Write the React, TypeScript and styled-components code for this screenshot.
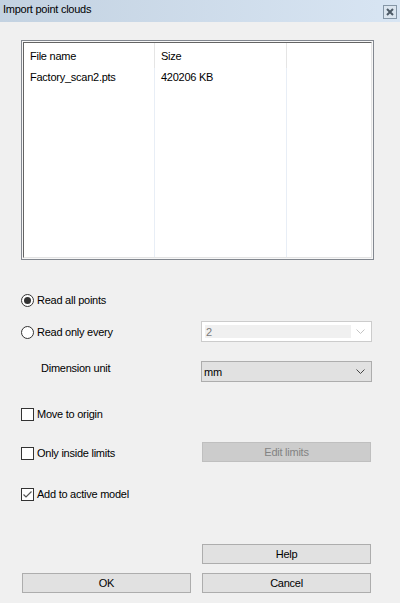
import React from "react";
import styled, { createGlobalStyle } from "styled-components";

const Global = createGlobalStyle`
  html, body { margin: 0; padding: 0; background: #f0f0f0; }
  body { width: 400px; height: 603px; overflow: hidden; font-family: "Liberation Sans", Arial, sans-serif; font-size: 11px; letter-spacing: -0.25px; color: #000; }
  * { box-sizing: border-box; }
`;

const Window = styled.div`
  width: 400px;
  height: 603px;
  background: #f0f0f0;
  display: flex;
  flex-direction: column;
`;

const TitleBar = styled.div`
  height: 22px;
  display: flex;
  align-items: center;
  justify-content: space-between;
  padding: 0 3px 0 3px;
  background: linear-gradient(to right, #c3d2e1, #d8e5f3);
`;

const Title = styled.span`
  font-size: 11px;
  color: #000;
  line-height: 1;
  margin-top: -3px;
`;

const CloseBox = styled.div`
  width: 14px;
  height: 14px;
  margin-top: 1px;
  border: 1px solid #8596a6;
  background: #dbe5ef;
  display: flex;
  align-items: center;
  justify-content: center;
`;

const Content = styled.div`
  padding: 18px 0 0 21px;
  display: flex;
  flex-direction: column;
`;

const ListFrame = styled.div`
  width: 353px;
  height: 220px;
  border: 1px solid #82878f;
  padding: 1px;
  background: #f7f7f7;
`;

const ListInner = styled.div`
  width: 100%;
  height: 100%;
  background: #fff;
  border-top: 1px solid #646464;
  border-left: 1px solid #646464;
  border-right: 1px solid #e3e3e3;
  border-bottom: 1px solid #e3e3e3;
  display: grid;
  grid-template-columns: 131px 132px 1fr;
`;

const Column = styled.div<{ $last?: boolean }>`
  border-right: ${(p) => (p.$last ? "none" : "1px solid #e8eef6")};
  display: flex;
  flex-direction: column;
`;

const HeaderCell = styled.div<{ $last?: boolean }>`
  height: 25px;
  display: flex;
  align-items: center;
  padding-left: 6px;
  margin-right: -1px;
  border-right: ${(p) => (p.$last ? "none" : "1px solid #e5e5e5")};
`;

const Cell = styled.div`
  height: 18px;
  display: flex;
  align-items: center;
  padding-left: 6px;
`;

const Row = styled.div<{ $mt: number }>`
  margin-top: ${(p) => p.$mt}px;
  height: 21px;
  display: flex;
  align-items: center;
`;

const LeftCell = styled.div<{ $indent?: number; $shift?: number }>`
  width: 180px;
  display: flex;
  align-items: center;
  padding-left: ${(p) => p.$indent ?? 0}px;
  transform: translateY(${(p) => p.$shift ?? 0}px);
`;

const Label = styled.span`
  margin-left: 3px;
  line-height: 1;
`;

const RadioCircle = styled.span<{ $on?: boolean }>`
  width: 13px;
  height: 13px;
  border-radius: 50%;
  border: 1px solid #333;
  background: #fff;
  display: flex;
  align-items: center;
  justify-content: center;
  &::after {
    content: "";
    width: 7px;
    height: 7px;
    border-radius: 50%;
    background: ${(p) => (p.$on ? "#333" : "transparent")};
  }
`;

const CheckBox = styled.span`
  width: 13px;
  height: 13px;
  border: 1px solid #333;
  background: #fff;
  display: flex;
  align-items: center;
  justify-content: center;
`;

const Combo = styled.div<{ $disabled?: boolean }>`
  width: 171px;
  height: 21px;
  border: 1px solid ${(p) => (p.$disabled ? "#cccccc" : "#adadad")};
  background: ${(p) => (p.$disabled ? "#ffffff" : "#e1e1e1")};
  display: flex;
  align-items: center;
  padding: 0 6px 0 ${(p) => (p.$disabled ? 3 : 1)}px;
  gap: 5px;
`;

const ComboText = styled.div<{ $disabled?: boolean }>`
  flex: 1;
  height: 13px;
  display: flex;
  align-items: center;
  background: ${(p) => (p.$disabled ? "#f0f0f0" : "transparent")};
  color: ${(p) => (p.$disabled ? "#7a7a7a" : "#000")};
  padding-left: 1px;
`;

const Button = styled.div<{ $disabled?: boolean; $ml?: number }>`
  width: 169px;
  height: 20px;
  margin-left: ${(p) => p.$ml ?? 0}px;
  background: ${(p) => (p.$disabled ? "#cccccc" : "#e1e1e1")};
  border: 1px solid ${(p) => (p.$disabled ? "#bfbfbf" : "#adadad")};
  color: ${(p) => (p.$disabled ? "#838383" : "#000")};
  display: flex;
  align-items: center;
  justify-content: center;
`;

const ButtonRow = styled.div<{ $mt: number }>`
  margin-top: ${(p) => p.$mt}px;
  display: flex;
  gap: 11px;
  padding-left: 1px;
`;

const Chevron = ({ color }: { color: string }) => (
  <svg width="9" height="5" viewBox="0 0 9 5">
    <path d="M0.5 0.5 L4.5 4.5 L8.5 0.5" fill="none" stroke={color} strokeWidth="1" />
  </svg>
);

const Radio = ({ on, label }: { on?: boolean; label: string }) => (
  <>
    <RadioCircle $on={on} />
    <Label>{label}</Label>
  </>
);

const Check = ({ on, label }: { on?: boolean; label: string }) => (
  <>
    <CheckBox>
      {on && (
        <svg width="11" height="11" viewBox="0 0 11 11">
          <path d="M1.5 5.5 L4 8 L9.5 2.5" fill="none" stroke="#555" strokeWidth="1.2" />
        </svg>
      )}
    </CheckBox>
    <Label>{label}</Label>
  </>
);

export default function App() {
  return (
    <Window>
      <Global />
      <TitleBar>
        <Title>Import point clouds</Title>
        <CloseBox>
          <svg width="8" height="8" viewBox="0 0 8 8">
            <path d="M1 1 L7 7 M7 1 L1 7" stroke="#4d5a66" strokeWidth="2" />
          </svg>
        </CloseBox>
      </TitleBar>
      <Content>
        <ListFrame>
          <ListInner>
            <Column>
              <HeaderCell>File name</HeaderCell>
              <Cell>Factory_scan2.pts</Cell>
            </Column>
            <Column>
              <HeaderCell>Size</HeaderCell>
              <Cell>420206 KB</Cell>
            </Column>
            <Column $last>
              <HeaderCell $last />
            </Column>
          </ListInner>
        </ListFrame>

        <Row $mt={30}>
          <LeftCell>
            <Radio on label="Read all points" />
          </LeftCell>
        </Row>
        <Row $mt={10}>
          <LeftCell $shift={1}>
            <Radio label="Read only every" />
          </LeftCell>
          <Combo $disabled>
            <ComboText $disabled>2</ComboText>
            <Chevron color="#c4c4c4" />
          </Combo>
        </Row>
        <Row $mt={19}>
          <LeftCell $indent={17} $shift={-3}>
            <Label>Dimension unit</Label>
          </LeftCell>
          <Combo>
            <ComboText>mm</ComboText>
            <Chevron color="#444" />
          </Combo>
        </Row>
        <Row $mt={22}>
          <LeftCell>
            <Check label="Move to origin" />
          </LeftCell>
        </Row>
        <Row $mt={16}>
          <LeftCell $shift={2}>
            <Check label="Only inside limits" />
          </LeftCell>
          <Button $disabled $ml={1}>Edit limits</Button>
        </Row>
        <Row $mt={22}>
          <LeftCell>
            <Check on label="Add to active model" />
          </LeftCell>
        </Row>
        <ButtonRow $mt={39}>
          <Button $ml={180}>Help</Button>
        </ButtonRow>
        <ButtonRow $mt={9}>
          <Button>OK</Button>
          <Button>Cancel</Button>
        </ButtonRow>
      </Content>
    </Window>
  );
}
